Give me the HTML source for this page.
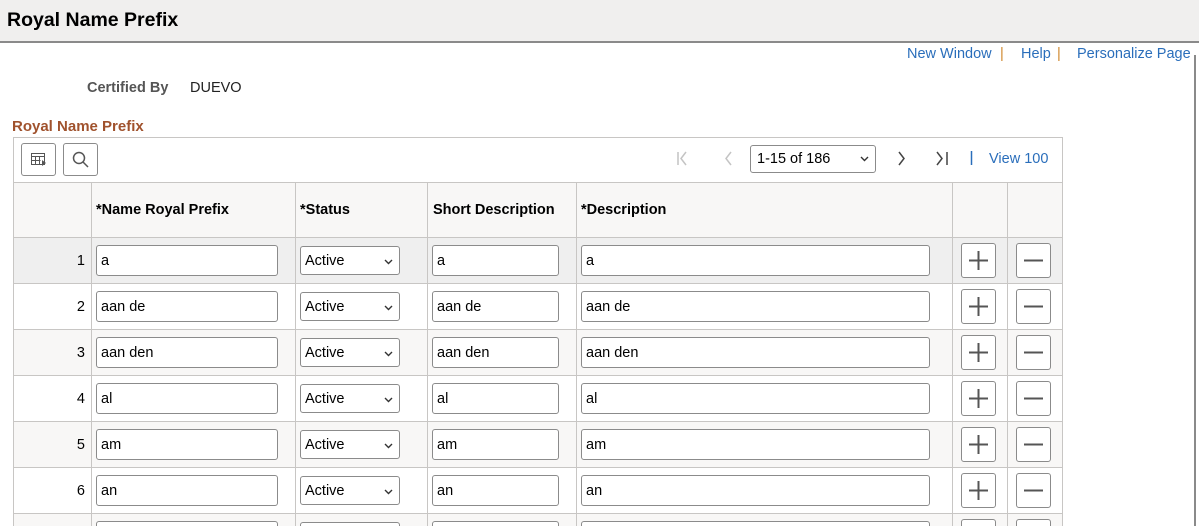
<!DOCTYPE html>
<html style="overflow:hidden;height:526px"><head><style>
*{box-sizing:border-box;margin:0;padding:0}
html,body{width:1199px;height:526px;overflow:hidden}
body{background:#fff;font-family:"Liberation Sans",Arial,sans-serif;font-size:14.5px;color:#000;position:relative}
.abs{position:absolute}
.hdr{left:0;top:0;width:1199px;height:43px;background:#f0efee;border-bottom:2px solid #8a8a8a}
.hdr h1{position:absolute;left:7px;top:9px;font-size:19.5px;font-weight:bold;color:#000}
a{color:#2a6ebb;text-decoration:none;position:absolute;top:45px;font-size:14.5px}
.sep{position:absolute;top:45px;color:#d0882e}
.inp{position:absolute;height:31px;border:1px solid #8b8b8b;border-radius:3px;background:#fff;padding:7px 4px 0;font-size:14.5px;overflow:hidden}
.btn{position:absolute;width:35px;height:35px;border:1px solid #8b8b8b;border-radius:3px;background:#fff}
.vl{position:absolute;width:1px;background:#c8c6c4}
.hl{position:absolute;height:1px;background:#c8c6c4;left:13px;width:1050px}
#wrap{position:absolute;left:0;top:0;width:1199px;height:526px;overflow:hidden}
</style></head><body><div id="wrap">
<div class="abs hdr"><h1>Royal Name Prefix</h1></div>
<a style="left:907px;top:46px">New Window</a><span class="sep" style="left:1000px;top:46px">|</span>
<a style="left:1021px;top:46px">Help</a><span class="sep" style="left:1057px;top:46px">|</span>
<a style="left:1077px;top:46px">Personalize Page</a>
<div class="abs" style="left:1194px;top:55px;width:2px;height:471px;background:#8a8a8a"></div>
<div class="abs" style="left:87px;top:80px;font-weight:bold;color:#555">Certified By</div>
<div class="abs" style="left:190px;top:80px;color:#222">DUEVO</div>
<div class="abs" style="left:12px;top:118px;font-weight:bold;color:#a0522d;font-size:15px">Royal Name Prefix</div>
<div class="abs" style="left:13px;top:137px;width:1050px;height:389px;border:1px solid #c8c6c4;border-bottom:none"></div>
<div class="abs" style="left:14px;top:183px;width:1048px;height:54px;background:#f8f7f6"></div>
<div class="abs" style="left:14px;top:238px;width:1048px;height:45px;background:#efefef"></div>
<div class="abs" style="left:14px;top:330px;width:1048px;height:45px;background:#f8f7f6"></div>
<div class="abs" style="left:14px;top:422px;width:1048px;height:45px;background:#f8f7f6"></div>
<div class="abs" style="left:14px;top:514px;width:1048px;height:12px;background:#f8f7f6"></div>
<div class="hl" style="top:182px"></div><div class="hl" style="top:237px"></div><div class="hl" style="top:283px"></div><div class="hl" style="top:329px"></div><div class="hl" style="top:375px"></div><div class="hl" style="top:421px"></div><div class="hl" style="top:467px"></div><div class="hl" style="top:513px"></div>
<div class="vl" style="left:91px;top:183px;height:343px"></div>
<div class="vl" style="left:295px;top:183px;height:343px"></div>
<div class="vl" style="left:427px;top:183px;height:343px"></div>
<div class="vl" style="left:576px;top:183px;height:343px"></div>
<div class="vl" style="left:952px;top:183px;height:343px"></div>
<div class="vl" style="left:1007px;top:183px;height:343px"></div>
<div class="btn" style="left:21px;top:143px;width:35px;height:33px"><svg width="33" height="31"><g fill="none" stroke="#555" stroke-width="1"><rect x="9.5" y="9.5" width="13" height="11"/><path d="M9.5 12.5h13M9.5 16.5h9M13.5 12.5v8M17.5 12.5v8"/></g><path d="M20 16l4 3-4 3z" fill="#555"/></svg></div>
<div class="btn" style="left:63px;top:143px;width:35px;height:33px"><svg width="33" height="31"><circle cx="15" cy="14" r="5.5" fill="none" stroke="#555" stroke-width="1.5"/><path d="M19 18l5 5" stroke="#555" stroke-width="1.5"/></svg></div>
<svg class="abs" style="left:670px;top:148px" width="400" height="22">
<g fill="none" stroke-width="1.5"><path d="M8 4v13M16 4l-5 6.5 5 6.5" stroke="#c4c4c4"/><path d="M61 4l-5 6.5 5 6.5" stroke="#c4c4c4"/>
<path d="M229 4l5 6.5-5 6.5" stroke="#444"/><path d="M267 4l5 6.5-5 6.5M277 4v13" stroke="#444"/><path d="M301.5 3v14" stroke="#2a6ebb"/></g></svg>
<div class="inp" style="left:750px;top:145px;width:126px;height:28px;padding:5px 6px 0">1-15 of 186<svg style="position:absolute;right:6px;top:10px" width="9" height="6"><path d="M1 1l3.5 3.5L8 1" fill="none" stroke="#333" stroke-width="1.4"/></svg></div>
<div class="abs" style="left:989px;top:151px;color:#2a6ebb">View 100</div>
<div class="abs" style="left:96px;top:202px;font-weight:bold">*Name Royal Prefix</div>
<div class="abs" style="left:300px;top:202px;font-weight:bold">*Status</div>
<div class="abs" style="left:433px;top:202px;font-weight:bold">Short Description</div>
<div class="abs" style="left:581px;top:202px;font-weight:bold">*Description</div>
<div id="rows"></div>
<script>
var v=["a","aan de","aan den","al","am","an",""];var h="";
for(var i=0;i<7;i++){var t=237+46*i;
h+='<div class="abs" style="left:60px;width:25px;text-align:right;top:'+(t+16)+'px">'+(i<6?i+1:'')+'</div>';
h+='<div class="inp" style="left:96px;width:182px;top:'+(t+8)+'px">'+v[i]+'</div>';
h+='<div class="inp" style="left:300px;width:100px;height:29px;top:'+(t+9)+'px;padding:6px 4px 0">'+(i<6?'Active':'')+'<svg style="position:absolute;right:6px;top:12px" width="9" height="6"><path d="M1 1l3.5 3.5L8 1" fill="none" stroke="#333" stroke-width="1.4"/></svg></div>';
h+='<div class="inp" style="left:432px;width:127px;top:'+(t+8)+'px">'+v[i]+'</div>';
h+='<div class="inp" style="left:581px;width:349px;top:'+(t+8)+'px">'+v[i]+'</div>';
h+='<div class="btn" style="left:961px;top:'+(t+6)+'px"><svg width="33" height="33"><path d="M7 16.5h19M16.5 7v19" stroke="#555" stroke-width="2"/></svg></div>';
h+='<div class="btn" style="left:1016px;top:'+(t+6)+'px"><svg width="33" height="33"><path d="M7 16.5h19" stroke="#555" stroke-width="2"/></svg></div>';}
document.getElementById('rows').innerHTML=h;
</script>
</div></body></html>
